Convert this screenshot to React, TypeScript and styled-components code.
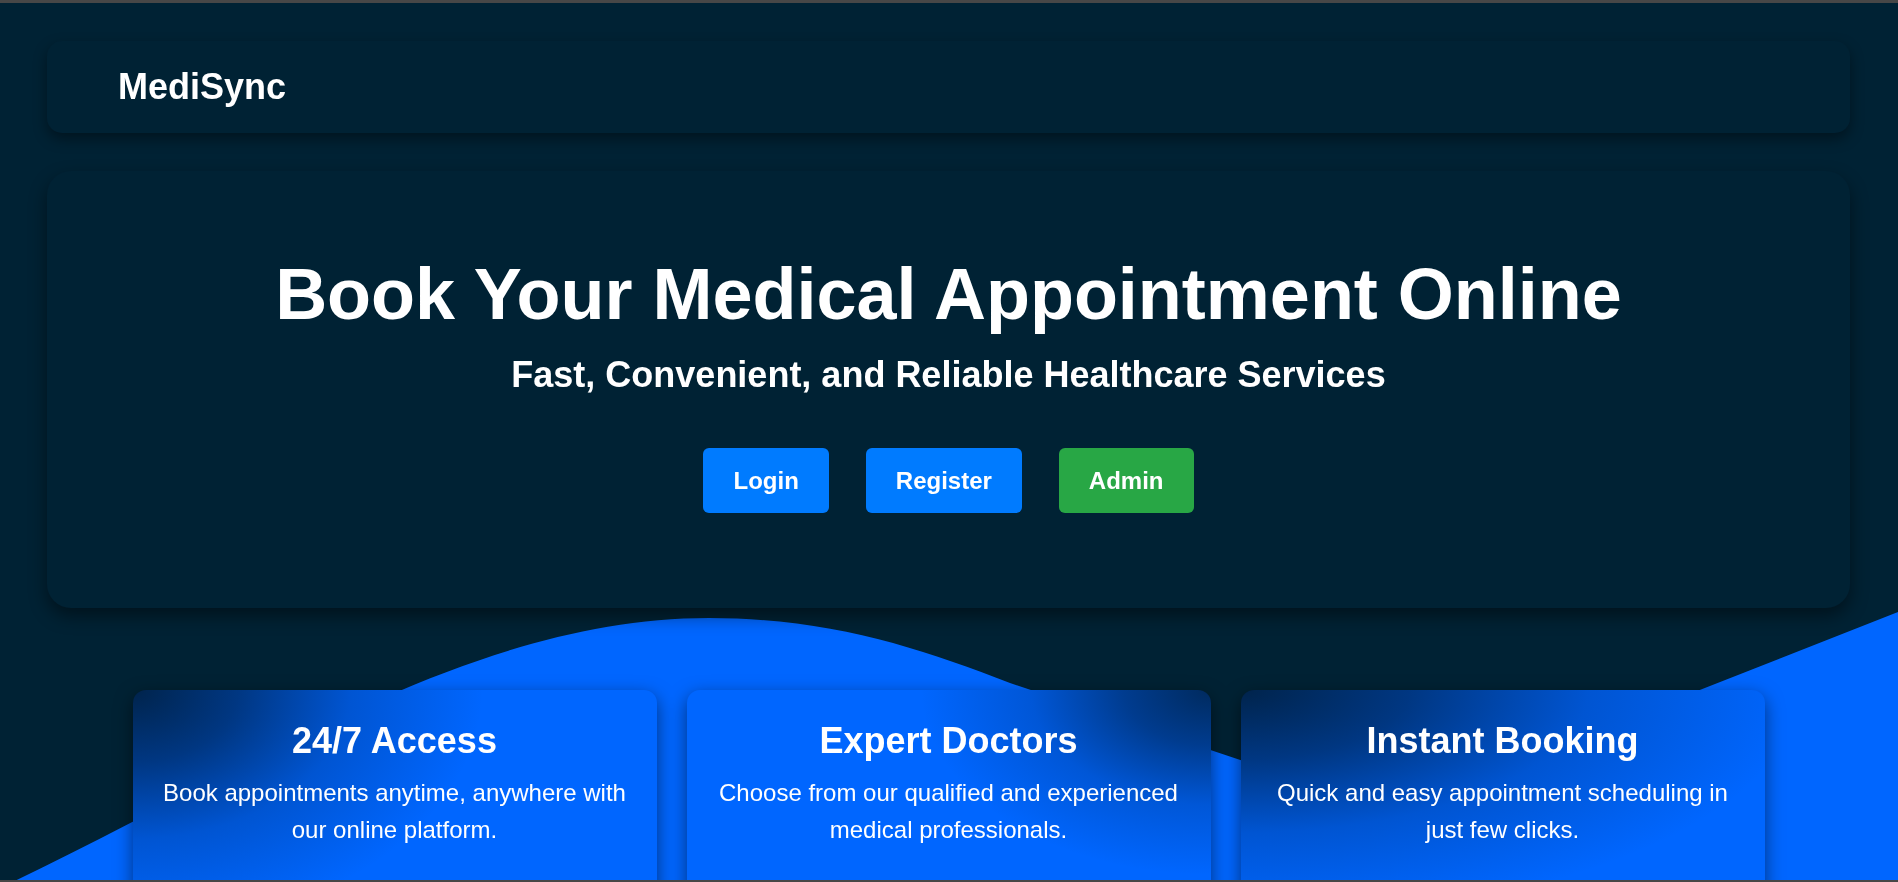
import React from 'react';
import styled, { createGlobalStyle } from 'styled-components';

interface Glow {
  // where the dark shade sits on the card and how far it reaches
  at: string;
  size: string;
  strength: number;
}

interface Feature {
  id: string;
  title: string;
  description: string;
  glow: Glow;
}

const features: Feature[] = [
  {
    id: 'access',
    title: '24/7 Access',
    description: 'Book appointments anytime, anywhere with our online platform.',
    glow: { at: '0 0', size: '350px 240px', strength: 0.95 },
  },
  {
    id: 'doctors',
    title: 'Expert Doctors',
    description: 'Choose from our qualified and experienced medical professionals.',
    glow: { at: '100% 0', size: '290px 185px', strength: 0.85 },
  },
  {
    id: 'booking',
    title: 'Instant Booking',
    description: 'Quick and easy appointment scheduling in just few clicks.',
    glow: { at: '0 0', size: '560px 230px', strength: 0.95 },
  },
];

const GlobalStyle = createGlobalStyle`
  * {
    box-sizing: border-box;
  }
  body {
    margin: 0;
    background: #002234;
    color: #ffffff;
    font-family: 'Liberation Sans', Arial, sans-serif;
  }
`;

const WaveLayer = styled.svg`
  position: fixed;
  inset: 0;
  width: 100%;
  height: 100vh;
  z-index: 0;
  pointer-events: none;
`;

// thin grey frame of the window, top and bottom
const Frame = styled.div`
  position: fixed;
  inset: 0;
  border-top: 3px solid #474747;
  border-bottom: 2px solid #474747;
  pointer-events: none;
  z-index: 10;
`;

const Page = styled.main`
  position: relative;
  z-index: 1;
  padding: 41px 48px 0 47px;
`;

const Navbar = styled.nav`
  background: #002234;
  border-radius: 15px;
  padding: 26px 71px;
  box-shadow: 0 6px 14px rgba(0, 0, 0, 0.4);
`;

const Logo = styled.div`
  font-size: 36px;
  font-weight: 700;
  line-height: 40px;
`;

const Hero = styled.section`
  margin-top: 38px;
  padding: 83px 40px 95px;
  background: #002234;
  border-radius: 24px;
  text-align: center;
  box-shadow: 0 8px 18px rgba(0, 0, 0, 0.45);
`;

const HeroTitle = styled.h1`
  margin: 0 0 21px;
  font-size: 72px;
  font-weight: 700;
  line-height: 80px;
`;

const HeroSubtitle = styled.h2`
  margin: 0;
  font-size: 36px;
  font-weight: 700;
  line-height: 40px;
`;

const ButtonRow = styled.div`
  margin-top: 53px;
  display: flex;
  justify-content: center;
  gap: 37px;
`;

const ActionButton = styled.button<{ $variant: 'primary' | 'success' }>`
  border: none;
  border-radius: 6px;
  padding: 19px 30px;
  background: ${props => (props.$variant === 'success' ? '#28a745' : '#007bff')};
  color: #ffffff;
  font-family: inherit;
  font-size: 24px;
  font-weight: 700;
  line-height: 27px;
  cursor: pointer;
`;

const FeatureGrid = styled.section`
  margin-top: 82px;
  display: grid;
  grid-template-columns: repeat(3, 524px);
  justify-content: center;
  gap: 30px;
`;

const FeatureCard = styled.article<{ $glow: Glow }>`
  padding: 31px 28px 60px;
  border-radius: 13px;
  background:
    radial-gradient(
      ellipse ${p => p.$glow.size} at ${p => p.$glow.at},
      rgba(0, 32, 66, ${p => p.$glow.strength}) 0%,
      rgba(0, 36, 80, ${p => p.$glow.strength * 0.75}) 30%,
      rgba(0, 50, 120, ${p => p.$glow.strength * 0.35}) 62%,
      rgba(0, 102, 255, 0) 100%
    ),
    #0066ff;
  box-shadow: 0 6px 18px rgba(0, 0, 0, 0.5);
  text-align: center;
`;

const FeatureTitle = styled.h3`
  margin: 0 0 13px;
  font-size: 36px;
  font-weight: 700;
  line-height: 40px;
`;

const FeatureText = styled.p`
  margin: 0;
  font-size: 24px;
  line-height: 37px;
`;

const App: React.FC = () => {
  return (
    <>
      <GlobalStyle />
      <WaveLayer viewBox="0 0 1898 882" preserveAspectRatio="none">
        <path
          fill="#0066ff"
          d="M0,888 C250,770 470,618 709,618 C830,618 920,648 1010,683 L1360,800 Q1390,812 1420,800 L1898,612 L1898,882 L0,882 Z"
        />
      </WaveLayer>
      <Page>
        <Navbar>
          <Logo>MediSync</Logo>
        </Navbar>
        <Hero>
          <HeroTitle>Book Your Medical Appointment Online</HeroTitle>
          <HeroSubtitle>Fast, Convenient, and Reliable Healthcare Services</HeroSubtitle>
          <ButtonRow>
            <ActionButton $variant="primary">Login</ActionButton>
            <ActionButton $variant="primary">Register</ActionButton>
            <ActionButton $variant="success">Admin</ActionButton>
          </ButtonRow>
        </Hero>
        <FeatureGrid>
          {features.map(feature => (
            <FeatureCard key={feature.id} $glow={feature.glow}>
              <FeatureTitle>{feature.title}</FeatureTitle>
              <FeatureText>{feature.description}</FeatureText>
            </FeatureCard>
          ))}
        </FeatureGrid>
      </Page>
      <Frame />
    </>
  );
};

export default App;
